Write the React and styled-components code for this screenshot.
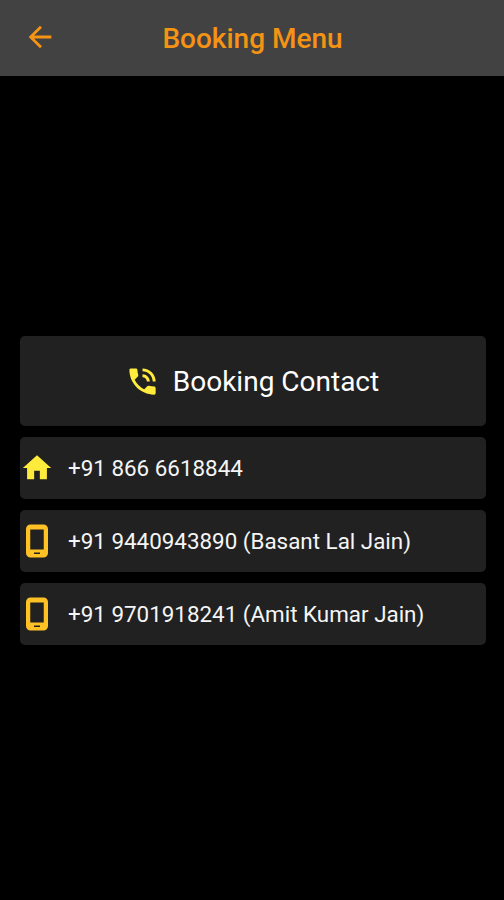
import styled, { createGlobalStyle } from "styled-components";
import { MdArrowBack, MdHome, MdPhoneInTalk } from "react-icons/md";

// phone with a thicker frame than the one in react-icons
function MobileIcon({ size }) {
    return (
        <svg width={size} height={size} viewBox="0 0 34 34" fill="currentColor">
            <path
                fillRule="evenodd"
                d="M10.500 .5h13a4.500 4.500 0 0 1 4.500 4.500v24a4.500 4.500 0 0 1-4.500 4.500h-13a4.500 4.500 0 0 1-4.500-4.500V5a4.500 4.500 0 0 1 4.500-4.500zM10.250 5.500v20h13.500v-20zM14 28.500v1.500h6v-1.500z"
            />
        </svg>
    );
}

const contacts = [
    { icon: MdHome, color: "#FFEB3B", label: "+91 866 6618844" },
    { icon: MobileIcon, color: "#FFC124", label: "+91 9440943890 (Basant Lal Jain)" },
    { icon: MobileIcon, color: "#FFC124", label: "+91 9701918241 (Amit Kumar Jain)" },
];

export default function App() {
    return (
        <>
            <GlobalStyle />
            <Screen>
                <TopBar>
                    <BackButton aria-label="Back">
                        <MdArrowBack size={34} />
                    </BackButton>
                    <Title>Booking Menu</Title>
                </TopBar>
                <Content>
                    <HeadCard>
                        <MdPhoneInTalk size={35} />
                        <HeadLabel>Booking Contact</HeadLabel>
                    </HeadCard>
                    {contacts.map(({ icon: Icon, color, label }) => (
                        <ContactCard key={label} $color={color}>
                            <Icon size={34} />
                            <ContactLabel>{label}</ContactLabel>
                        </ContactCard>
                    ))}
                </Content>
            </Screen>
        </>
    );
}

const GlobalStyle = createGlobalStyle`
    * {
        box-sizing: border-box;
    }
    body {
        margin: 0;
        background-color: #000000;
        font-family: Roboto, sans-serif;
    }
`;

const Screen = styled.div`
    height: 900px;
    display: flex;
    flex-direction: column;
    background-color: #000000;
`;

const TopBar = styled.header`
    height: 76px;
    padding: 0 23px;
    display: grid;
    grid-template-columns: 34px 1fr 34px;
    align-items: center;
    background-color: #424242;
    color: #F59314;
`;

const BackButton = styled.button`
    padding: 0 0 2px;
    border: 0;
    display: flex;
    background: none;
    color: inherit;
`;

const Title = styled.h1`
    margin: 0;
    padding-left: 1px;
    font-size: 28px;
    font-weight: 500;
    text-align: center;
`;

const Content = styled.main`
    padding: 260px 18px 0 20px;
    display: flex;
    flex-direction: column;
    gap: 11px;
`;

const Card = styled.div`
    display: flex;
    align-items: center;
    border-radius: 5px;
    background-color: #212121;
`;

const HeadCard = styled(Card)`
    height: 90px;
    padding-right: 2px;
    justify-content: center;
    gap: 13px;
    color: #FFEB3B;
`;

const HeadLabel = styled.h2`
    margin: 0;
    color: #FFFFFF;
    font-size: 28px;
    font-weight: 400;
`;

const ContactCard = styled(Card)`
    height: 62px;
    gap: 14px;
    color: ${({ $color }) => $color};
`;

const ContactLabel = styled.span`
    color: #F5F5F5;
    font-size: 22.4px;
`;
